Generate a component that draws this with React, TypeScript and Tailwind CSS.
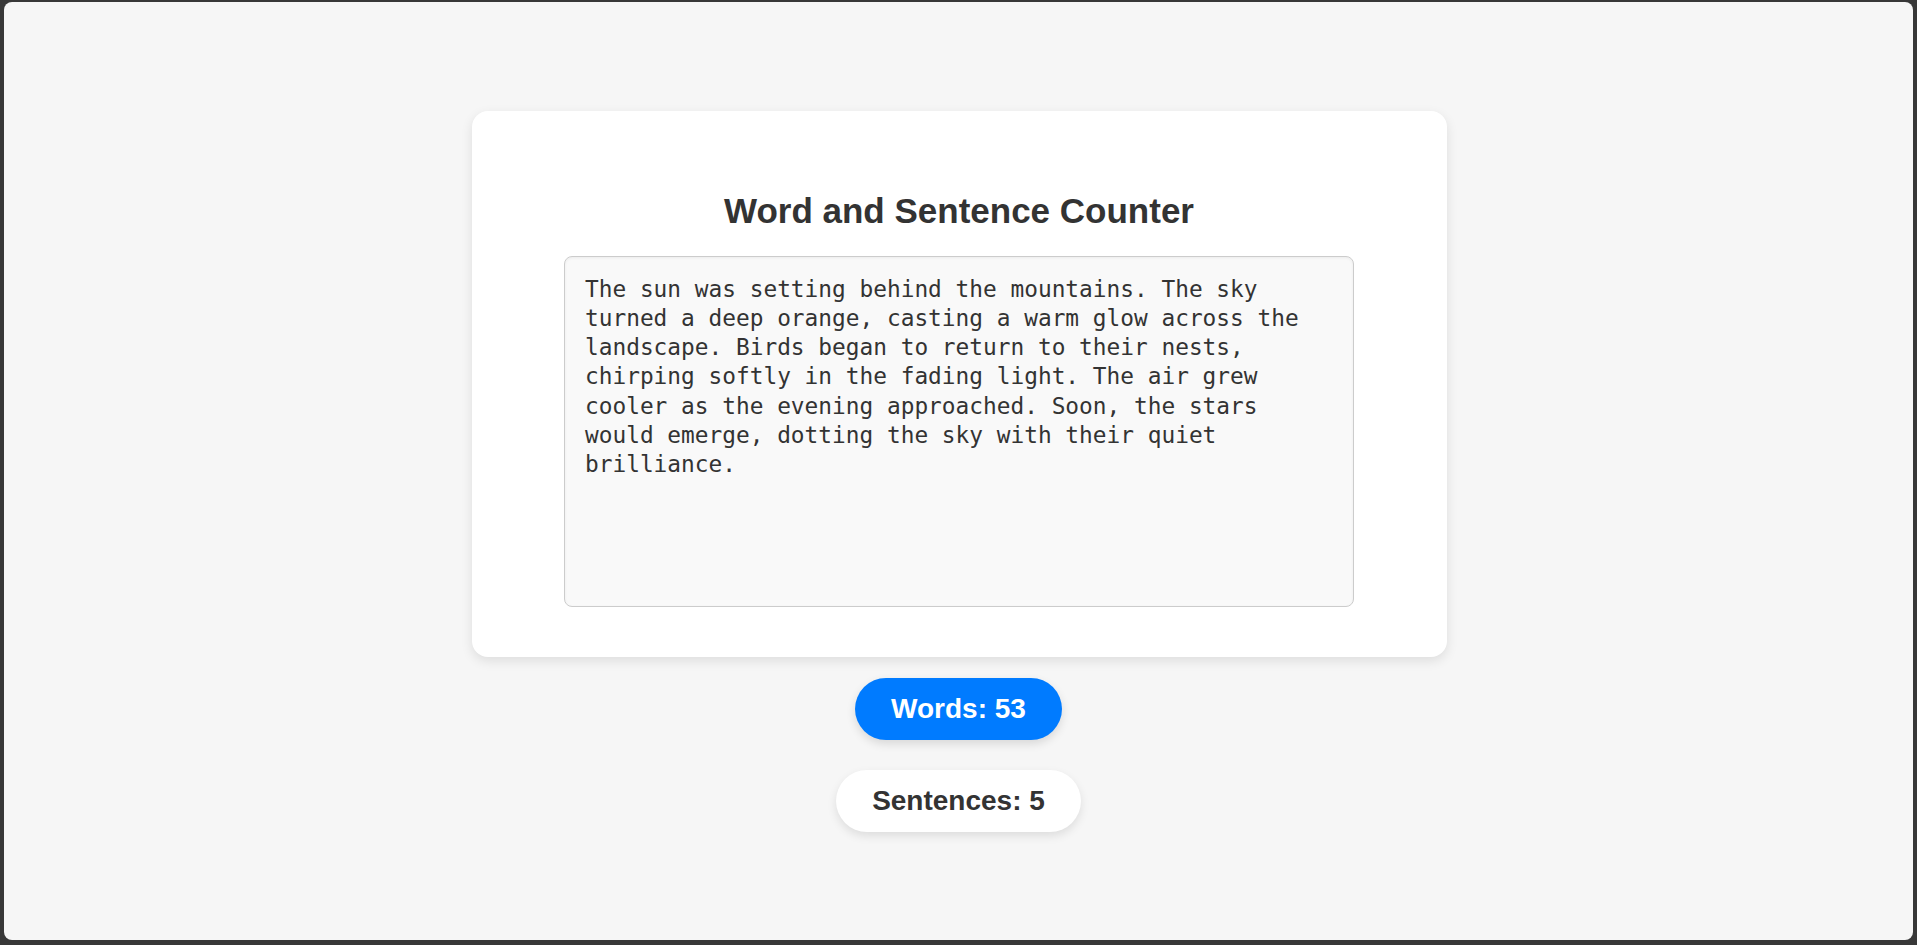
import React from "react";

const TEXT =
  "The sun was setting behind the mountains. The sky turned a deep orange, casting a warm glow across the landscape. Birds began to return to their nests, chirping softly in the fading light. The air grew cooler as the evening approached. Soon, the stars would emerge, dotting the sky with their quiet brilliance.";

export default function App() {
  const [text, setText] = React.useState(TEXT);
  const words = text.trim() ? text.trim().split(/\s+/).length : 0;
  const sentences = text.split(/[.!?]+/).filter((s) => s.trim().length > 0).length;

  return (
    <div className="h-[945px] w-full bg-[#383838] pt-[2px] pl-[4px] pr-[4px] pb-[5px]">
      <div className="flex h-full w-full flex-col items-center justify-center rounded-[8px] bg-[#f6f6f6] font-['Liberation_Sans',Arial,sans-serif]">
        <div className="ml-[1px] flex w-[975px] flex-col items-center rounded-[16px] bg-white pt-[80px] pb-[50px] shadow-[0_4px_12px_rgba(0,0,0,0.1)]">
          <h1 className="text-[35px] font-bold leading-[40px] text-[#333333]">
            Word and Sentence Counter
          </h1>
          <textarea
            value={text}
            onChange={(e) => setText(e.target.value)}
            spellCheck={false}
            className="mt-[25px] h-[351px] w-[790px] resize-none rounded-[8px] border border-[#cccccc] bg-[#f9f9f9] pt-[18px] pl-[20px] pr-[30px] font-['DejaVu_Sans_Mono',monospace] text-[22.8px] leading-[29.3px] text-[#333333] shadow-[inset_0_1px_3px_rgba(0,0,0,0.06)] outline-none"
          />
        </div>
        <div className="mt-[21px] flex h-[62px] items-center rounded-full bg-[#007bff] px-[36px] text-[28px] font-bold text-white shadow-[0_4px_10px_rgba(0,0,0,0.12)]">
          Words: {words}
        </div>
        <div className="mt-[30px] flex h-[62px] items-center rounded-full bg-white px-[36px] text-[28px] font-bold text-[#333333] shadow-[0_4px_10px_rgba(0,0,0,0.1)]">
          Sentences: {sentences}
        </div>
      </div>
    </div>
  );
}
